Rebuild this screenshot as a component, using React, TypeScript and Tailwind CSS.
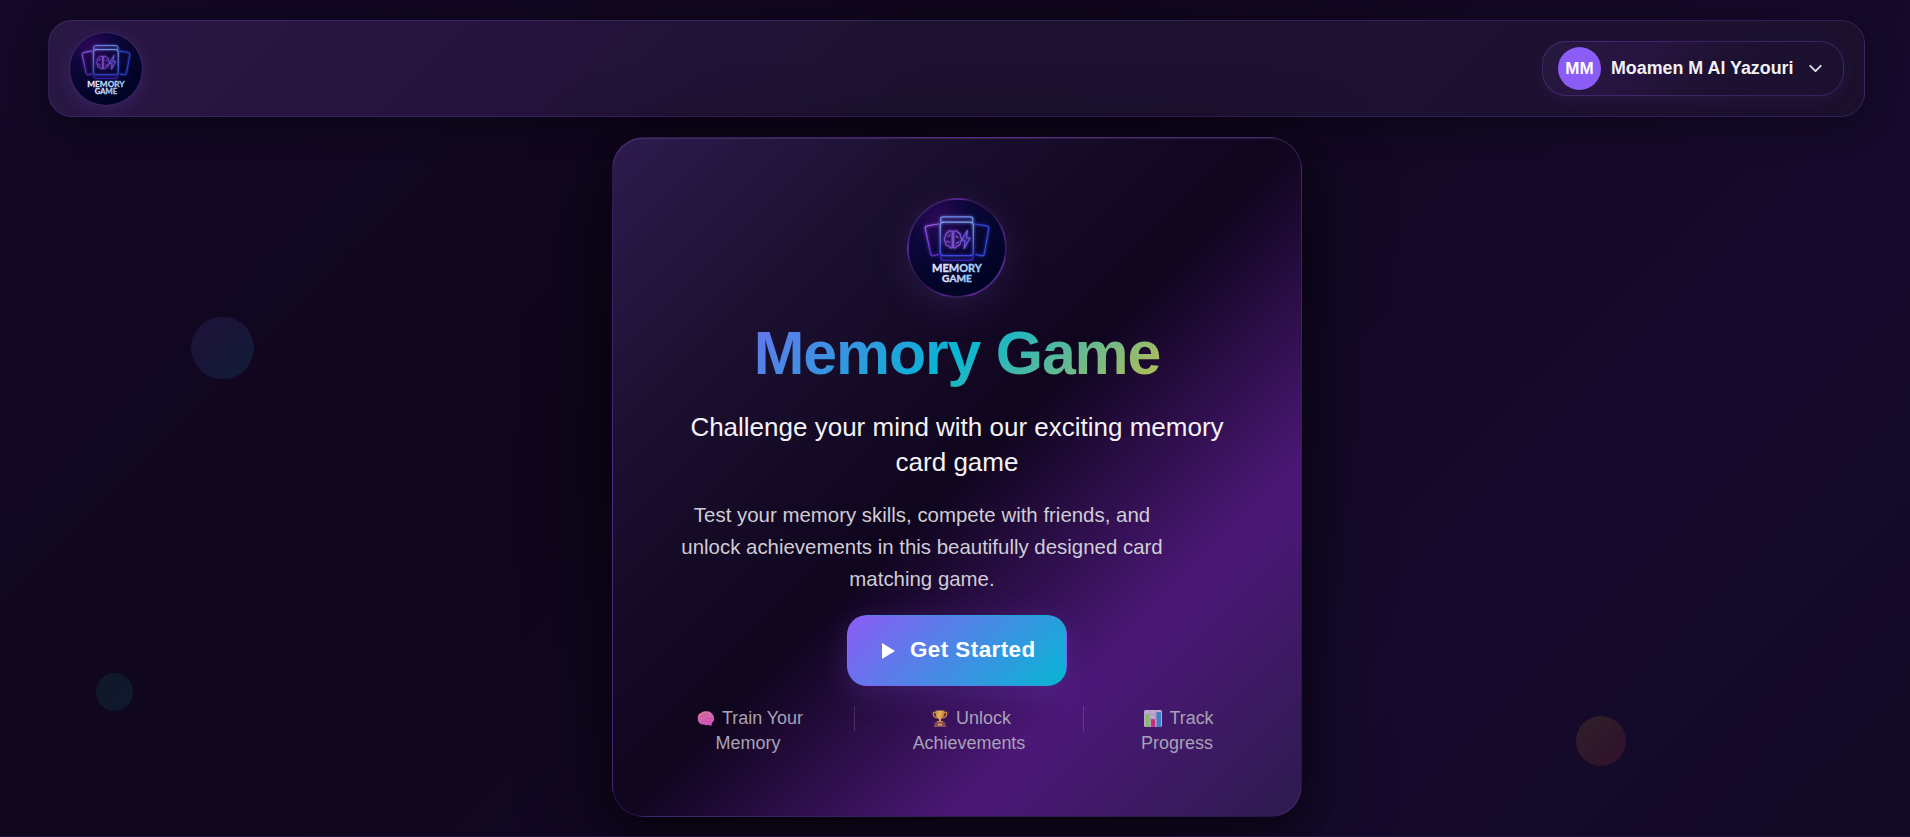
import { ChevronDown } from "lucide-react";

function Logo({ className }: { className: string }) {
  return (
    <svg viewBox="0 0 100 100" className={className}>
      <defs>
        <radialGradient id="disc" cx="0.3" cy="0.18" r="0.75">
          <stop offset="0" stopColor="#2c0756" />
          <stop offset="0.45" stopColor="#0c073a" />
          <stop offset="1" stopColor="#020426" />
        </radialGradient>
        <linearGradient id="card" x1="0" y1="0" x2="0" y2="1">
          <stop offset="0" stopColor="#7fa0f5" />
          <stop offset="1" stopColor="#3b46e0" />
        </linearGradient>
        <linearGradient id="left" x1="0" y1="0" x2="0" y2="1">
          <stop offset="0" stopColor="#9a5cf0" />
          <stop offset="1" stopColor="#5a2cc0" />
        </linearGradient>
        <linearGradient id="word" x1="0" y1="0" x2="1" y2="0">
          <stop offset="0" stopColor="#f0eaff" />
          <stop offset="1" stopColor="#8fc8f5" />
        </linearGradient>
        <filter id="glow" x="-20%" y="-20%" width="140%" height="140%">
          <feGaussianBlur stdDeviation="1.6" result="b" />
          <feMerge>
            <feMergeNode in="b" />
            <feMergeNode in="SourceGraphic" />
          </feMerge>
        </filter>
      </defs>
      <circle cx="50" cy="50" r="50" fill="url(#disc)" />
      <g transform="translate(1 0.5)" fill="none" strokeWidth="1.3" strokeLinejoin="round" strokeLinecap="round" filter="url(#glow)">
        <path d="M29.500 24.500 L18 26.500 Q15.500 27 16 29.500 L21.500 55.500 Q22 58 24.500 57.500 L29.500 56.500" stroke="url(#left)" />
        <path d="M67.500 24.500 L80 26.500 Q82.500 27 82 29.500 L77.500 55.500 Q77 58 74.500 57.500 L68.500 56.500" stroke="#2f49dc" />
        <path d="M32 22 V19.500 Q32 17 34.500 17 H63 Q65.500 17 65.500 19.500 V22" stroke="#6f8df2" />
        <path d="M32 58 V60 Q32 62.500 34.500 62.500 H63 Q65.500 62.500 65.500 60 V58" stroke="#3922b0" />
        <rect x="31.500" y="22.500" width="34.500" height="35" rx="3.500" stroke="url(#card)" />
        <g stroke="#8a52de" strokeWidth="1.100">
          <path d="M44 32 Q40 30.500 39.500 33.500 Q36.500 34 37 37.500 Q34.500 40.500 37 43.500 Q37 47.500 40.500 47.500 Q42 50.500 44 49 Z" />
          <path d="M45.500 32 Q49.500 30.500 50 33.500 Q53 34 52.500 37.500 Q55 40.500 52.500 43.500 Q52.500 47.500 49 47.500 Q47.500 50.500 45.500 49 Z" />
          <path d="M39.500 37.500 q1.500 -.3 1.800 -1.500 M38.500 42.500 q2 -.5 2.500 1.500 M50 38.500 q-1.500 -.3 -1.800 -1.500 M51 43.500 q-2 -.5 -2.500 1.500" />
        </g>
        <path d="M60 31 L53.800 41.500 H57.500 L56.500 50 L62.500 39 H58.800 Z" stroke="#7358e8" strokeWidth="1.100" />
      </g>
      <g fontFamily="Lato, 'Liberation Sans', sans-serif" fontWeight="700" textAnchor="middle" fill="url(#word)" stroke="url(#word)" strokeWidth="0.350">
        <text x="50" y="75" fontSize="11.600" textLength="52" lengthAdjust="spacingAndGlyphs">MEMORY</text>
        <text x="50" y="85.200" fontSize="10.400" textLength="31" lengthAdjust="spacingAndGlyphs">GAME</text>
      </g>
    </svg>
  );
}

function Header() {
  return (
    <header className="ml-12 mr-[45px] flex h-[97px] shrink-0 items-center justify-between rounded-3xl border border-[rgba(139,92,246,0.2)] bg-[linear-gradient(135deg,#291844_0%,#25133d_25%,#1c122f_50%,#1d1131_75%,#1a102c_100%)] px-5 shadow-[0_8px_32px_rgba(0,0,0,0.35)]">
      <div className="size-[74px] overflow-hidden rounded-full border border-[rgba(139,92,246,0.2)] shadow-[0_4px_16px_rgba(139,92,246,0.15)]">
        <Logo className="size-full" />
      </div>
      <button className="flex h-[55px] w-[302px] items-center rounded-3xl border border-[rgba(139,92,246,0.25)] bg-[linear-gradient(135deg,#25183d_0%,#281441_30%,#1d1130_60%,#1b1030_100%)] pl-[15px] pr-[17px] shadow-[0_4px_16px_rgba(139,92,246,0.08)]">
        <span className="flex size-[43px] items-center justify-center rounded-full bg-[#8b5cf6] text-[17px] font-bold text-white">MM</span>
        <span className="ml-[10px] whitespace-nowrap text-[17.850px] font-bold text-[#f1f1f4]">Moamen M Al Yazouri</span>
        <ChevronDown className="ml-auto size-[21px] text-[#dddde2]" strokeWidth={2.200} />
      </button>
    </header>
  );
}

function Brain() {
  return (
    <svg viewBox="0 0 18 17" className="h-[17px] w-[18px]">
      <defs>
        <linearGradient id="brain" x1="0" y1="0" x2="0.4" y2="1">
          <stop offset="0" stopColor="#d47a92" />
          <stop offset="1" stopColor="#d352bd" />
        </linearGradient>
      </defs>
      <path d="M.7 8 Q.7 4 3.500 3 Q5.500 1 9 1.200 Q13 .8 15 3.500 Q17.500 6 17.200 9 Q17.300 11.500 15 13 L14.200 16 L11.500 15 Q9 15.800 7 14.500 Q3.500 15 2.500 13 Q.3 11.500 .7 8 Z" fill="url(#brain)" />
      <path d="M3 8 Q4.500 5 7 6 Q8 3.500 11 4.500 M8 9.500 Q11 7 13 9 Q15 9 15.500 7 M4 11.200 Q7 12.200 9 11.200 Q11 12.500 13.500 11.500" fill="none" stroke="#b9509a" strokeWidth=".6" />
    </svg>
  );
}

function Trophy() {
  return (
    <svg viewBox="0 0 18 17" className="h-[17px] w-[18px]">
      <defs>
        <linearGradient id="cup" x1="0" y1="0" x2="1" y2="0.3">
          <stop offset="0" stopColor="#c8803a" />
          <stop offset="0.5" stopColor="#e0b45e" />
          <stop offset="1" stopColor="#c9772f" />
        </linearGradient>
      </defs>
      <path d="M5 2.500 H2.300 Q1.800 7 6 7.800 M13 2.500 H15.700 Q16.200 7 12 7.800" fill="none" stroke="#c9853f" strokeWidth="1.300" />
      <path d="M4.500 .5 H13.500 Q14 7.500 10 9.200 V11.500 H8 V9.200 Q4 7.500 4.500 .5 Z" fill="url(#cup)" />
      <path d="M6 11 H12 L12.500 12.500 H5.500 Z" fill="#d28a3c" />
      <path d="M4 12.300 H14 L15 17 H3 Z" fill="#8a4f5c" />
      <rect x="7" y="13.600" width="4" height="2" fill="#d6a14e" />
    </svg>
  );
}

function Chart() {
  return (
    <svg viewBox="0 0 18 17" className="h-[17px] w-[18px]">
      <rect width="18" height="17" rx="1.500" fill="#c0abd0" />
      <path d="M0 4.500 H18 M0 9 H18 M6 0 V17 M11.500 0 V17" stroke="#a894bd" strokeWidth=".8" />
      <rect x="1.500" y="4.500" width="4" height="12.500" fill="#86bf62" />
      <rect x="7" y="9.200" width="4" height="7.800" fill="#c93078" />
      <rect x="12.500" y="2" width="4.500" height="15" fill="#3f7fc8" />
    </svg>
  );
}

function Divider() {
  return <span className="h-[25px] w-px shrink-0 bg-white/15" />;
}

const line = "flex items-center justify-center gap-[7px] pl-1";

export default function App() {
  return (
    <div className="relative flex h-[837px] w-full flex-col overflow-hidden border-b border-[#1e1338] bg-[linear-gradient(135deg,#130826_0%,#0f061b_38%,#160a2d_75%,#120924_100%)] pt-5 font-['Liberation_Sans',Arial,sans-serif] text-white">
      <div className="absolute left-[191px] top-[317px] h-[62px] w-[63px] rounded-full bg-[linear-gradient(135deg,#8b5cf6,#06b6d4)] opacity-[0.12]" />
      <div className="absolute left-[96px] top-[673px] h-[38px] w-[37px] rounded-full bg-[linear-gradient(135deg,#10b981,#06b6d4)] opacity-10" />
      <div className="absolute left-[1576px] top-[716px] size-[50px] rounded-full bg-[linear-gradient(135deg,#fbbf24,#ef4444)] opacity-[0.12]" />
      <Header />
      <main className="relative ml-[612px] mt-5 flex h-[680px] w-[690px] shrink-0 flex-col items-center rounded-[32px] border border-[rgba(139,92,246,0.2)] bg-[linear-gradient(135deg,#2d1b4e_0%,#1a0f2e_25%,#0f051d_50%,#4c1878_75%,#2d1b4e_100%)] px-16 pt-[60px] shadow-[0_24px_80px_rgba(0,0,0,0.6),0_8px_32px_rgba(0,0,0,0.3),inset_0_1px_0_rgba(255,255,255,0.1)]">
        <div className="size-[100px] shrink-0 rounded-full border-2 border-[rgba(139,92,246,0.2)] bg-[linear-gradient(135deg,#2d1b4e_0%,#1a0f2e_25%,#0f051d_50%,#4c1878_75%,#2d1b4e_100%)] shadow-[0_8px_40px_rgba(139,92,246,0.15)]">
          <Logo className="size-full" />
        </div>
        <h1 className="mt-[19px] w-full bg-[linear-gradient(135deg,#8b5cf6_0%,#06b6d4_50%,#fbbf24_100%)] bg-clip-text text-center text-[60.800px] font-bold leading-[73px] tracking-[-1.150px] text-transparent">Memory Game</h1>
        <p className="mt-5 w-full text-center text-[26px] leading-[35px] text-[#f3f2f6]">Challenge your mind with our exciting memory card game</p>
        <p className="ml-1 mt-[19px] w-[482px] self-start whitespace-nowrap text-center text-[20.430px] leading-8 text-[#cfcdd5]">
          Test your memory skills, compete with friends, and
          <br />
          unlock achievements in this beautifully designed card
          <br />
          matching game.
        </p>
        <button className="mt-5 flex h-[71px] w-[220px] shrink-0 items-center rounded-[20px] border border-transparent bg-[linear-gradient(135deg,#8b5cf6_0%,#06b6d4_100%)] pb-0.5 pl-[34px] shadow-[0_8px_32px_rgba(139,92,246,0.2)]">
          <svg viewBox="0 0 13 16" className="mt-0.5 h-4 w-[13px]"><path d="M0 0 L13 8 L0 16 Z" fill="#fff" /></svg>
          <span className="ml-[15px] whitespace-nowrap text-[22.400px] font-bold tracking-[0.450px]">Get Started</span>
        </button>
        <div className="mt-5 flex w-full items-start text-center text-[17.950px] leading-[25px] text-[#a9a2b5]">
          <div className="mr-[35px] w-[142px]">
            <div className={line}><Brain />Train Your</div>
            <div>Memory</div>
          </div>
          <Divider />
          <div className="mx-[47px] w-[134px]">
            <div className={line}><Trophy />Unlock</div>
            <div>Achievements</div>
          </div>
          <Divider />
          <div className="ml-[48px] w-[90px]">
            <div className={line}><Chart />Track</div>
            <div>Progress</div>
          </div>
        </div>
      </main>
    </div>
  );
}
